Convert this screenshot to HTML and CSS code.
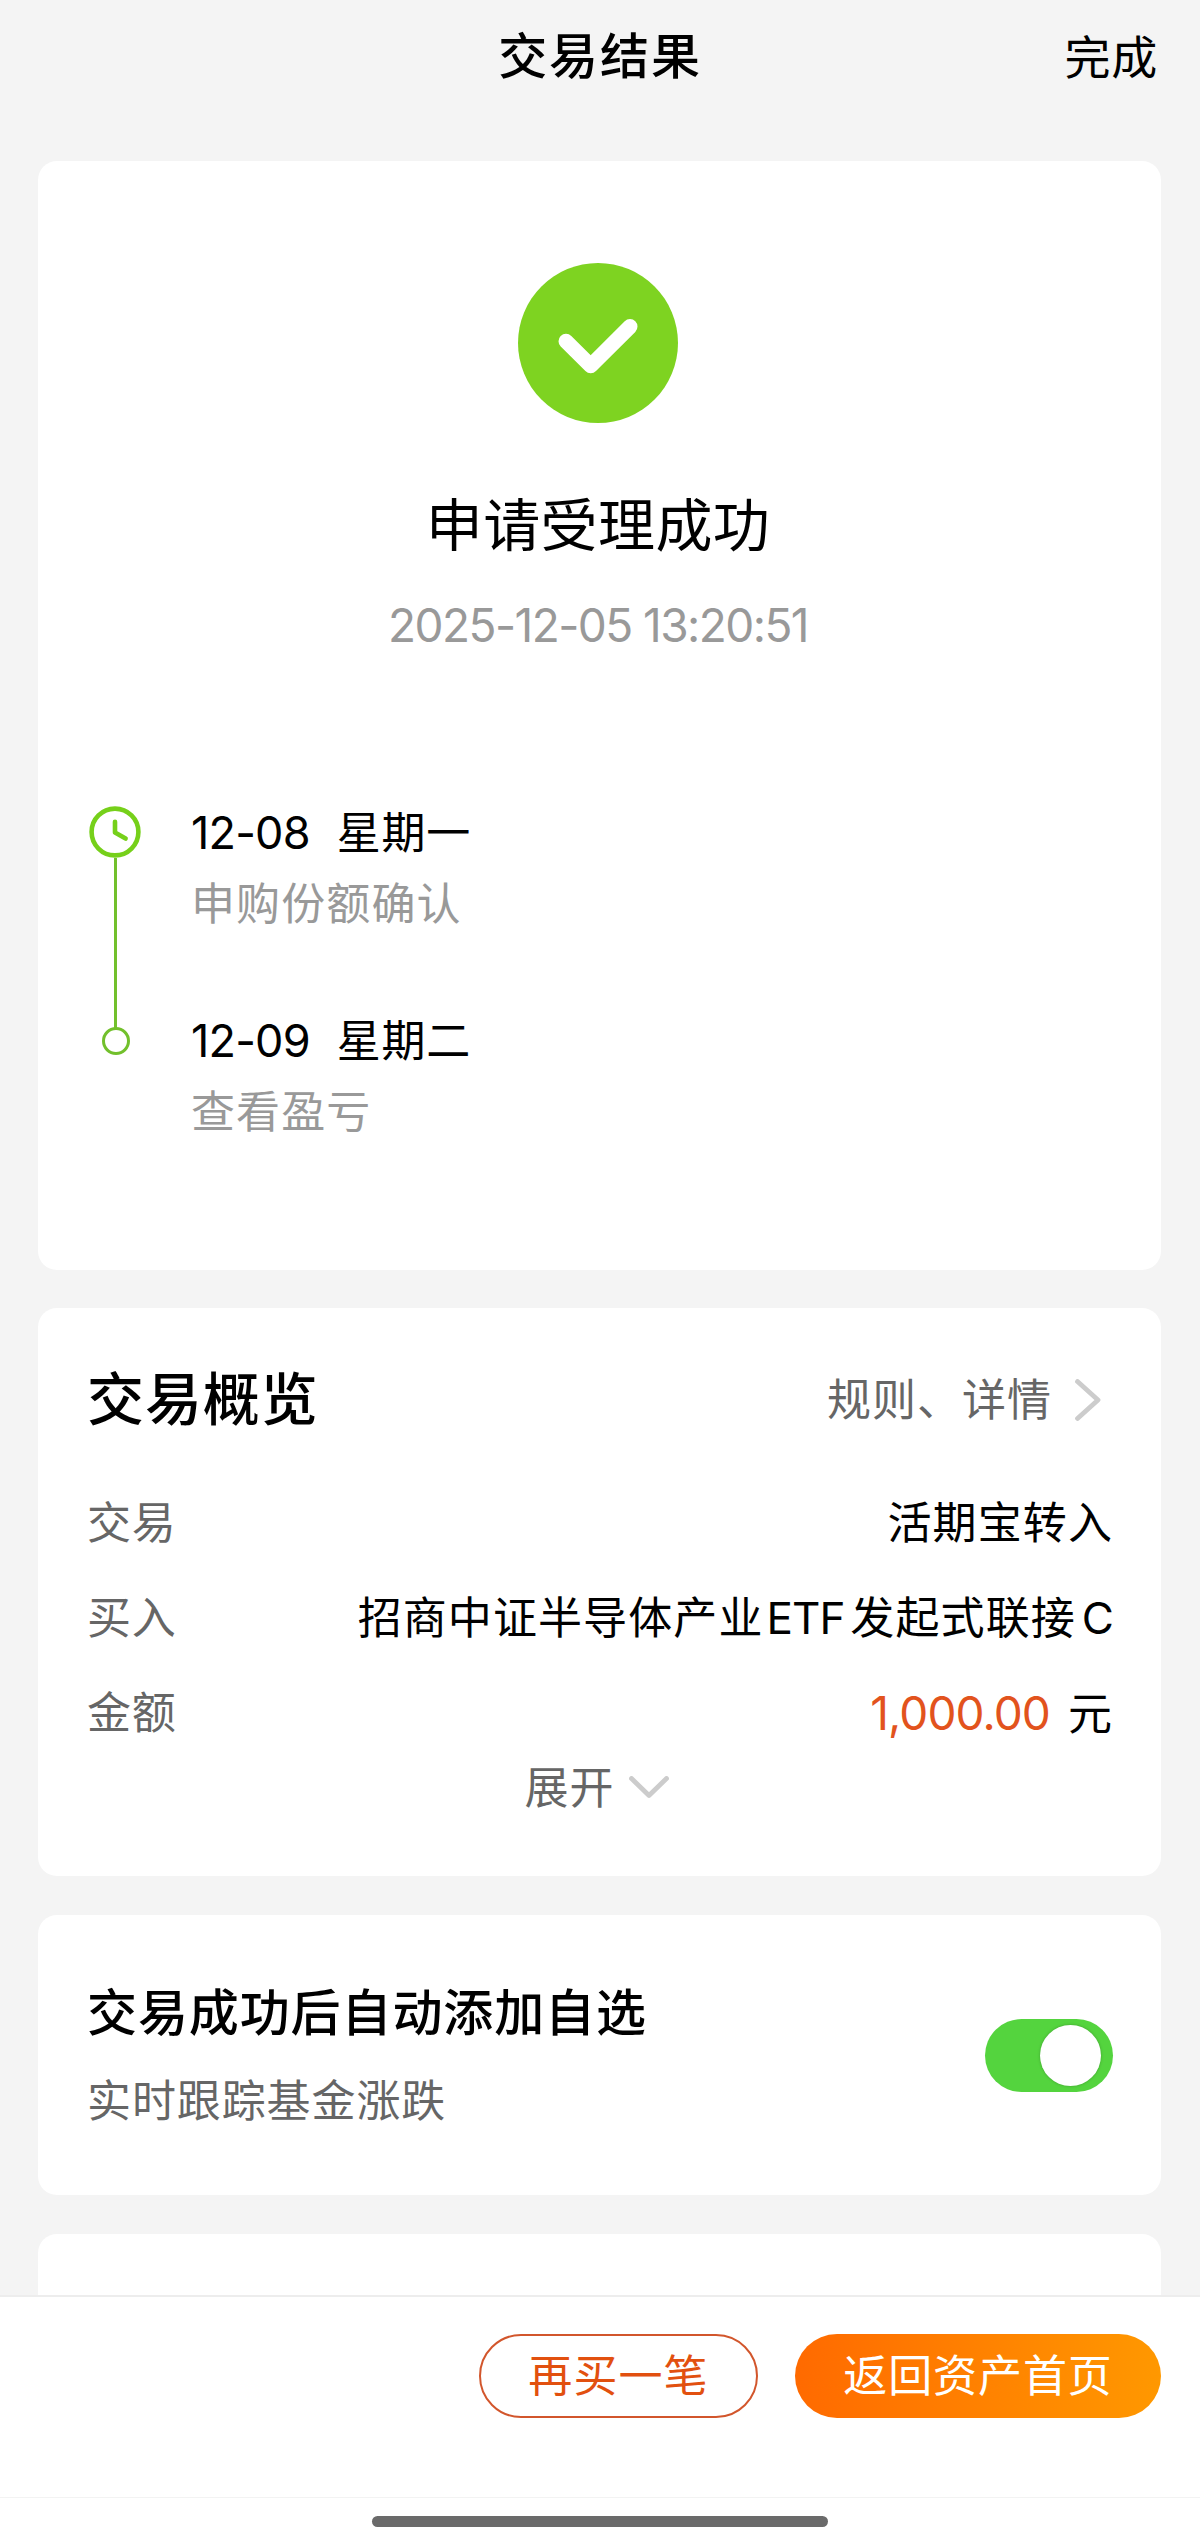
FILE: index.html
```
<!DOCTYPE html>
<html lang="zh-CN">
<head>
<meta charset="utf-8">
<title>交易结果</title>
<link rel="stylesheet" href="styles.css">
</head>
<body>
<div class="page">
  <header class="topbar">
    <h1 class="topbar-title">交易结果</h1>
    <a class="topbar-done">完成</a>
  </header>

  <main class="content">
    <section class="card result">
      <svg class="result-icon" viewBox="0 0 160 160">
        <circle cx="80" cy="80" r="80" fill="#7ed321"/>
        <path d="M48 78.2 72.7 102.8 112 63.6" fill="none" stroke="#fff" stroke-width="15" stroke-linecap="round" stroke-linejoin="round"/>
      </svg>
      <h2 class="result-title">申请受理成功</h2>
      <p class="result-time">2025-12-05 13:20:51</p>

      <ol class="steps">
        <li class="step">
          <div class="step-rail">
            <svg class="step-clock" viewBox="0 0 52 52">
              <circle cx="26" cy="26" r="23.4" fill="none" stroke="#76d01a" stroke-width="4.6"/>
              <path d="M26 15.8V26.6L36.6 32.6" fill="none" stroke="#76d01a" stroke-width="4.6" stroke-linecap="round" stroke-linejoin="round"/>
            </svg>
            <span class="step-line"></span>
          </div>
          <div class="step-body">
            <p class="step-date"><span class="step-day">12-08</span><span>星期一</span></p>
            <p class="step-note">申购份额确认</p>
          </div>
        </li>
        <li class="step">
          <div class="step-rail">
            <span class="step-dot"></span>
          </div>
          <div class="step-body">
            <p class="step-date"><span class="step-day">12-09</span><span>星期二</span></p>
            <p class="step-note">查看盈亏</p>
          </div>
        </li>
      </ol>
    </section>

    <section class="card overview">
      <div class="overview-head">
        <h2 class="overview-title">交易概览</h2>
        <a class="overview-link">
          <span>规则、详情</span>
          <svg class="chevron-right" viewBox="0 0 26 42">
            <path d="M2.5 2.5 23 21 2.5 39.5" fill="none" stroke="#ccc" stroke-width="4.8" stroke-linecap="round" stroke-linejoin="round"/>
          </svg>
        </a>
      </div>
      <dl class="rows">
        <div class="row"><dt>交易</dt><dd>活期宝转入</dd></div>
        <div class="row"><dt>买入</dt><dd>招商中证半导体产业<span class="latin etf">ETF</span>发起式联接<span class="latin share">C</span></dd></div>
        <div class="row"><dt>金额</dt><dd><span class="amount">1,000.00</span><span>元</span></dd></div>
      </dl>
      <a class="expand">
        <span>展开</span>
        <svg class="chevron-down" viewBox="0 0 40 24">
          <path d="M2.5 2.5 20 19.5 37.5 2.5" fill="none" stroke="#ccc" stroke-width="4.8" stroke-linecap="round" stroke-linejoin="round"/>
        </svg>
      </a>
    </section>

    <section class="card favorite">
      <div class="favorite-text">
        <h3 class="favorite-title">交易成功后自动添加自选</h3>
        <p class="favorite-note">实时跟踪基金涨跌</p>
      </div>
      <span class="switch"><span class="switch-knob"></span></span>
    </section>

    <section class="card next"></section>
  </main>

  <footer class="bottom">
    <div class="actions">
      <a class="button outline">再买一笔</a>
      <a class="button filled">返回资产首页</a>
    </div>
    <div class="gesture"><span class="gesture-bar"></span></div>
  </footer>
</div>
</body>
</html>
```
FILE: styles.css
```
* {
  box-sizing: border-box;
  margin: 0;
  padding: 0;
}

body {
  background: #f4f4f4;
  color: #000;
  font-family: Inter, "Noto Sans CJK SC", sans-serif;
  font-size: 44px;
  font-weight: 400;
  letter-spacing: 1.1px;
  line-height: 60px;
}

.page {
  display: flex;
  flex-direction: column;
  width: 1200px;
  height: 2545px;
  overflow: hidden;
}

/* top bar */
.topbar {
  display: grid;
  grid-template-columns: 1fr auto 1fr;
  align-items: center;
  height: 161px;
  padding: 1px 42px 48px;
}

.topbar-title {
  grid-column: 2;
  font-size: 49px;
  font-weight: 500;
  letter-spacing: 1.9px;
}

.topbar-done {
  justify-self: end;
  font-size: 46px;
  letter-spacing: 0.8px;
}

/* cards */
.content {
  display: flex;
  flex: 1;
  flex-direction: column;
  gap: 39px;
  min-height: 0;
  padding: 0 39px 0 38px;
  overflow: hidden;
}

.card {
  flex: none;
  border-radius: 19px;
  background: #fff;
}

.result {
  display: flex;
  flex-direction: column;
  height: 1109px;
  padding: 102px 51px 0;
}

.result-icon {
  align-self: center;
  width: 160px;
  height: 160px;
  margin-right: 3px;
}

.result-title {
  margin: 63px 3px 0 0;
  font-size: 57px;
  font-weight: 400;
  letter-spacing: 0.4px;
  line-height: 80px;
  text-align: center;
}

.result-time {
  margin: 29px 3px 0 0;
  color: #999;
  font-size: 46px;
  letter-spacing: -1.55px;
  text-align: center;
}

/* timeline */
.steps {
  margin-top: 148px;
  list-style: none;
}

.step {
  display: flex;
  gap: 49px;
  height: 208px;
}

.step-rail {
  display: flex;
  flex-direction: column;
  align-items: center;
  width: 53px;
}

.step-clock {
  flex: none;
  width: 52px;
  height: 52px;
  margin: 3px 2px 0 0;
}

.step-line {
  flex: none;
  width: 3px;
  height: 170px;
  background: #72c02c;
}

.step-dot {
  width: 28px;
  height: 28px;
  margin: 16px 0 0 1px;
  border: 3px solid #72c02c;
  border-radius: 50%;
}

.step-date {
  display: flex;
  gap: 27px;
}

.step-date span:last-child {
  letter-spacing: 0.8px;
}

.step-day {
  font-size: 45px;
  letter-spacing: -0.8px;
}

.step-note {
  margin-top: 11px;
  color: #999;
}

/* overview */
.overview {
  height: 568px;
  margin-top: -1px;
  padding: 52px 48px 0 49px;
}

.overview-head {
  display: flex;
  align-items: center;
  justify-content: space-between;
  height: 80px;
}

.overview-title {
  font-size: 57px;
  font-weight: 500;
  letter-spacing: 0.9px;
}

.overview-link {
  display: flex;
  align-items: center;
  gap: 23px;
  padding-right: 12px;
  color: #666;
  letter-spacing: 1px;
}

.chevron-right {
  width: 26px;
  height: 42px;
}

.rows {
  display: grid;
  gap: 35px;
  margin-top: 53px;
}

.row {
  display: flex;
  justify-content: space-between;
}

.row dt {
  color: #666;
  letter-spacing: 0.8px;
}

.latin {
  margin-left: 3px;
  letter-spacing: -1px;
}

.etf {
  margin-right: 6px;
}

.share {
  margin-left: 6px;
}

.amount {
  margin-right: 18px;
  color: #e2531d;
  font-size: 46px;
  letter-spacing: -0.9px;
}

.expand {
  display: flex;
  align-items: center;
  justify-content: center;
  gap: 14px;
  margin-top: 14px;
  padding-right: 7px;
  color: #666;
}

.chevron-down {
  width: 40px;
  height: 24px;
}

/* add to favorites */
.favorite {
  display: flex;
  align-items: center;
  justify-content: space-between;
  height: 280px;
  padding: 0 48px 0 49px;
}

.favorite-text {
  padding-top: 4px;
}

.favorite-title {
  font-size: 50px;
  font-weight: 500;
  letter-spacing: 0.9px;
}

.favorite-note {
  margin-top: 28px;
  color: #666;
  letter-spacing: 0.9px;
}

.switch {
  display: flex;
  align-items: center;
  justify-content: flex-end;
  width: 128px;
  height: 73px;
  padding-right: 12px;
  border-radius: 37px;
  background: #54d43e;
}

.switch-knob {
  width: 61px;
  height: 61px;
  border-radius: 50%;
  background: #fff;
  box-shadow: 0 0 3px rgba(0, 0, 0, 0.25);
}

.next {
  height: 280px;
}

/* bottom bar */
.bottom {
  flex: none;
  height: 250px;
  border-top: 2px solid #ededed;
  background: #fff;
}

.actions {
  display: flex;
  justify-content: flex-end;
  gap: 37px;
  height: 200px;
  padding: 37px 39px 0 0;
}

.button {
  display: flex;
  align-items: center;
  justify-content: center;
  height: 84px;
  border-radius: 42px;
}

.outline {
  width: 279px;
  border: 2px solid #d2562c;
  color: #e2500f;
}

.filled {
  width: 366px;
  background: linear-gradient(90deg, #ff6a00, #ff9800);
  color: #fff;
  letter-spacing: 0.9px;
}

.gesture {
  display: flex;
  justify-content: center;
  padding-top: 18px;
  border-top: 1px solid #f3f3f3;
}

.gesture-bar {
  width: 456px;
  height: 11px;
  border-radius: 6px;
  background: #6a6a6a;
}
```
